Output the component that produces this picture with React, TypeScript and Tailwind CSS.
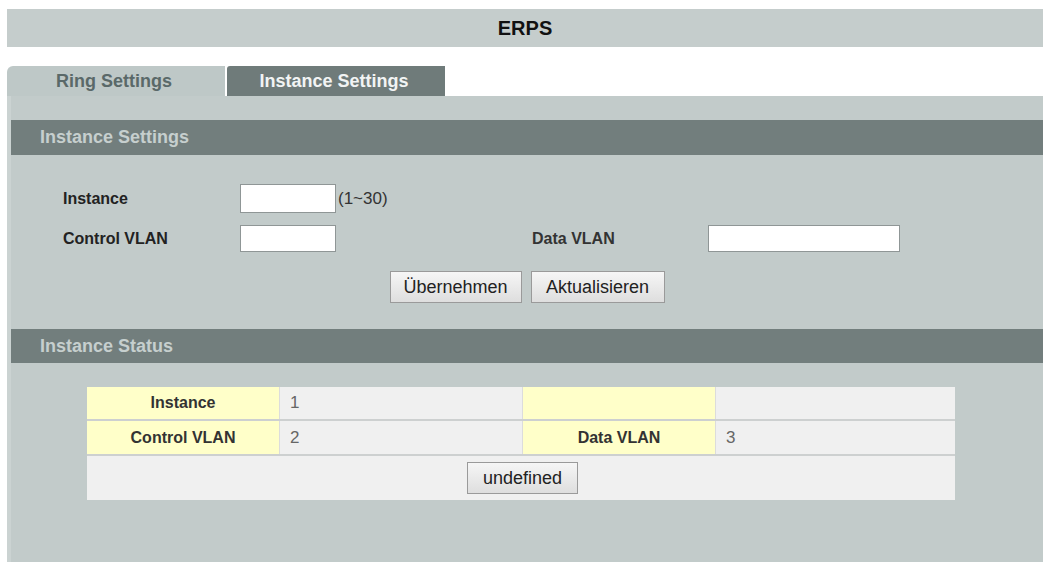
import React from "react";

const font = "font-['Liberation_Sans',Arial,Helvetica,sans-serif]";

function Btn({ label, w }: { label: string; w: string }) {
  return (
    <button
      className={`${w} h-[32px] border border-[#9a9a9a] bg-gradient-to-b from-[#f6f6f6] to-[#dedede] text-[18px] text-[#222] leading-none`}
    >
      {label}
    </button>
  );
}

function SectionHeader({ title, h }: { title: string; h: string }) {
  return (
    <div className={`${h} bg-[#727e7d] flex items-center pl-[29px] text-[18px] font-bold text-[#c6cfce]`}>
      {title}
    </div>
  );
}

export default function App() {
  return (
    <div className={`w-[1046px] h-[565px] bg-white pt-[9px] pl-[7px] pr-[3px] ${font}`}>
      {/* page title */}
      <div className="h-[38px] bg-[#c5cdcc] flex items-center justify-center text-[20px] font-bold text-[#111]">
        ERPS
      </div>

      {/* tabs */}
      <div className="mt-[19px] flex h-[30px] gap-[2px]">
        <div className="w-[218px] rounded-tl-[6px] bg-[#bec8c7] flex items-center justify-center text-[18px] font-bold text-[#5a6969] pr-[4px]">
          Ring Settings
        </div>
        <div className="w-[218px] rounded-tl-[3px] bg-[#6f7b7a] flex items-center justify-center text-[18px] font-bold text-[#f2f4f4] pr-[4px]">
          Instance Settings
        </div>
      </div>

      {/* panel */}
      <div className="h-[466px] bg-[#c2cbca] border-l-4 border-[#cbd3d2] pt-[24px]">
        <SectionHeader title="Instance Settings" h="h-[35px]" />

        <div className="pl-[52px] pt-[29px]">
          <div className="flex items-center h-[29px]">
            <div className="w-[177px] text-[16px] font-bold text-[#222]">Instance</div>
            <input className="w-[96px] h-[29px] bg-white border border-[#8f9696] outline-none" />
            <span className="ml-[2px] text-[17px] text-[#333]">(1~30)</span>
          </div>
          <div className="flex items-center h-[27px] mt-[12px]">
            <div className="w-[177px] text-[16px] font-bold text-[#222]">Control VLAN</div>
            <input className="w-[96px] h-[27px] bg-white border border-[#8f9696] outline-none" />
            <div className="ml-[196px] w-[176px] text-[16px] font-bold text-[#333]">Data VLAN</div>
            <input className="w-[192px] h-[27px] bg-white border border-[#8f9696] outline-none" />
          </div>
        </div>

        <div className="mt-[19px] flex justify-center gap-[9px]">
          <Btn label="Übernehmen" w="w-[132px]" />
          <Btn label="Aktualisieren" w="w-[134px]" />
        </div>

        <div className="mt-[26px]">
          <SectionHeader title="Instance Status" h="h-[34px]" />
        </div>

        {/* status table */}
        <div className="mt-[24px] ml-[76px] w-[868px] bg-[#f0f0f0]">
          <div className="grid grid-cols-[192px_243px_193px_240px] h-[34px] border-b-2 border-[#cdd0d0]">
            <div className="bg-[#ffffc9] flex items-center justify-center text-[16px] font-bold text-[#333]">Instance</div>
            <div className="border-l border-[#dcdcdc] flex items-center pl-[10px] text-[17px] text-[#666]">1</div>
            <div className="bg-[#ffffc9] border-l border-[#dcdcdc]"></div>
            <div className="border-l border-[#dcdcdc]"></div>
          </div>
          <div className="grid grid-cols-[192px_243px_193px_240px] h-[35px] border-b-2 border-[#cdd0d0]">
            <div className="bg-[#ffffc9] flex items-center justify-center text-[16px] font-bold text-[#333]">Control VLAN</div>
            <div className="border-l border-[#dcdcdc] flex items-center pl-[10px] text-[17px] text-[#666]">2</div>
            <div className="bg-[#ffffc9] border-l border-[#dcdcdc] flex items-center justify-center text-[16px] font-bold text-[#333]">Data VLAN</div>
            <div className="border-l border-[#dcdcdc] flex items-center pl-[10px] text-[17px] text-[#666]">3</div>
          </div>
          <div className="h-[44px] flex items-center justify-center pl-[3px]">
            <Btn label="undefined" w="w-[111px]" />
          </div>
        </div>
      </div>
    </div>
  );
}
